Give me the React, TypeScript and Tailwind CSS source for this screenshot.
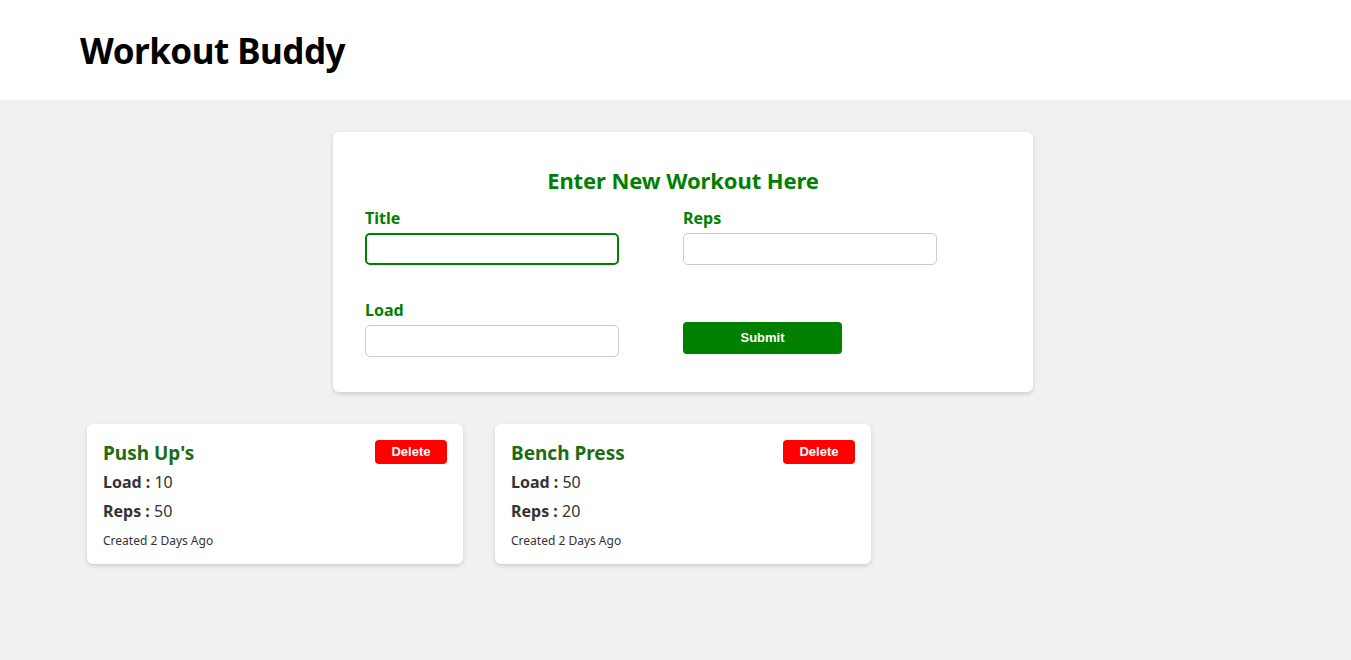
import { useState } from "react";

type Workout = {
  id: number;
  title: string;
  load: number;
  reps: number;
  created: string;
};

const workouts: Workout[] = [
  { id: 1, title: "Push Up's", load: 10, reps: 50, created: "Created 2 Days Ago" },
  { id: 2, title: "Bench Press", load: 50, reps: 20, created: "Created 2 Days Ago" },
];

const font = { fontFamily: "'Noto Sans', 'Open Sans', sans-serif" };

const WorkoutCard = ({ workout }: { workout: Workout }) => {
  return (
    <div className="w-[376px] h-[140px] bg-white rounded-md shadow-[0_2px_4px_rgba(0,0,0,0.15)] px-4 pt-4">
      <div className="flex justify-between items-start">
        <h4 className="text-[19px] font-bold text-[#1d6c12] leading-[24px] mt-[1px]">
          {workout.title}
        </h4>
        <button className="w-[72px] h-6 bg-[#ff0000] text-white text-[13px] font-bold rounded-[4px] font-['Liberation_Sans',Arial,sans-serif]">
          Delete
        </button>
      </div>
      <p className="text-[16px] text-[#333] leading-[22px] mt-[6px]">
        <strong>Load :</strong> {workout.load}
      </p>
      <p className="text-[16px] text-[#333] leading-[22px] mt-[7px]">
        <strong>Reps :</strong> {workout.reps}
      </p>
      <p className="text-[12px] text-[#333] leading-[16px] mt-[11px]">{workout.created}</p>
    </div>
  );
};

export default function App() {
  const [title, setTitle] = useState("");
  const [reps, setReps] = useState("");
  const [load, setLoad] = useState("");

  return (
    <div className="min-h-[660px] bg-[#f1f1f1]" style={font}>
      {/* header */}
      <header className="h-[100px] bg-white flex items-center px-20">
        <h1 className="text-[35px] font-bold text-black leading-none tracking-[-0.5px]">
          Workout Buddy
        </h1>
      </header>

      <div className="pt-8">
        <form
          className="w-[700px] ml-[333px] bg-white rounded-md shadow-[0_2px_4px_rgba(0,0,0,0.15)] px-8 pt-[34px] pb-[35px]"
          onSubmit={(e) => e.preventDefault()}
        >
          <h3 className="text-center text-[22px] font-bold text-[#008000] leading-[28px] tracking-[-0.1px]">
            Enter New Workout Here
          </h3>
          <div className="grid grid-cols-2 mt-[12px]">
            <div>
              <label className="block text-[16px] font-bold text-[#008000] leading-[24px]">Title</label>
              <input
                autoFocus
                value={title}
                onChange={(e) => setTitle(e.target.value)}
                className="mt-[3px] w-[254px] h-8 px-2 rounded-[5px] border-2 border-[#008000] outline-none caret-black"
              />
            </div>
            <div>
              <label className="block text-[16px] font-bold text-[#008000] leading-[24px]">Reps</label>
              <input
                value={reps}
                onChange={(e) => setReps(e.target.value)}
                className="mt-[3px] w-[254px] h-8 px-2 rounded-[5px] border border-[#ccc] outline-none"
              />
            </div>
            <div className="mt-[33px]">
              <label className="block text-[16px] font-bold text-[#008000] leading-[24px]">Load</label>
              <input
                value={load}
                onChange={(e) => setLoad(e.target.value)}
                className="mt-[3px] w-[254px] h-8 px-2 rounded-[5px] border border-[#ccc] outline-none"
              />
            </div>
            <div className="flex items-end pb-[3px]">
              <button
                type="submit"
                className="w-[159px] h-8 bg-[#008000] text-white text-[13px] font-bold rounded-[4px] font-['Liberation_Sans',Arial,sans-serif]"
              >
                Submit
              </button>
            </div>
          </div>
        </form>

        <div className="flex gap-8 px-[87px] mt-8">
          {workouts.map((w) => (
            <WorkoutCard key={w.id} workout={w} />
          ))}
        </div>
      </div>
    </div>
  );
}
